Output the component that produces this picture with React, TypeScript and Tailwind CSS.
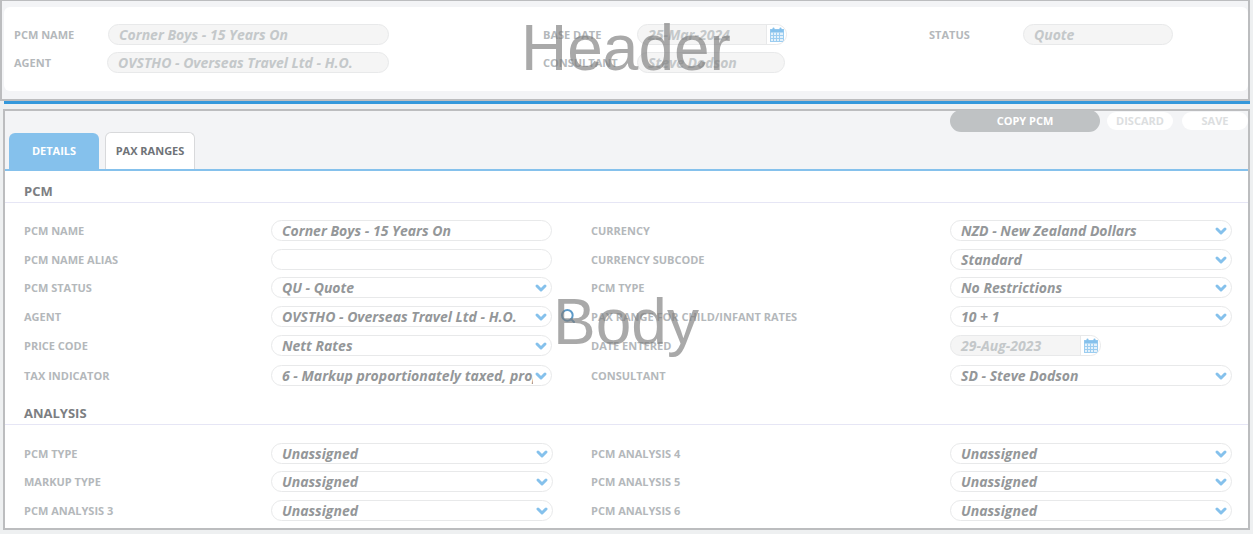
// PCM details form
import { ChevronDown, Search } from 'lucide-react';

function CalendarIcon() {
  return (
    <svg width="14" height="15" viewBox="0 0 14 15" className="shrink-0">
      <rect x="0.5" y="2.5" width="13" height="12" fill="#e3f1fb" stroke="#9ccdf0" />
      <rect x="0.5" y="2.5" width="13" height="3" fill="#85c1ec" />
      <path d="M3.5 5.5v9M6.5 5.5v9M9.5 5.5v9M.5 8.5h13M.5 11.5h13" stroke="#9ccdf0" strokeWidth="1" fill="none" />
      <rect x="2.5" y="0.5" width="2" height="3.5" rx="1" fill="#85c1ec" />
      <rect x="9.5" y="0.5" width="2" height="3.5" rx="1" fill="#85c1ec" />
    </svg>
  );
}

function HeaderField({ label, value, labelW, inputW, date }: { label: string; value: string; labelW: string; inputW: string; date?: boolean }) {
  return (
    <div className="flex items-center h-[21px]">
      <span className={`${labelW} shrink-0 pt-[2px] text-[11px] font-bold text-[#b4b8bb]`}>{label}</span>
      <div className={`${inputW} h-[21px] shrink-0 flex items-center rounded-full border border-[#e8e9ea] bg-[#f5f5f5] overflow-hidden`}>
        <span className="flex-1 pl-[10px] text-[14px] font-bold italic text-[#c4c8ca] whitespace-nowrap">{value}</span>
        {date && (
          <span className="w-[20px] h-full flex items-center justify-center bg-white border-l border-[#e8e9ea]">
            <CalendarIcon />
          </span>
        )}
      </div>
    </div>
  );
}

function Field({ label, value, type, labelW, inputW }: { label: string; value?: string; type: 'text' | 'select' | 'date'; labelW: string; inputW: string }) {
  return (
    <div className="flex items-center h-[21px]">
      <span className={`${labelW} shrink-0 pt-[2px] text-[11px] font-bold text-[#b4b8bb] whitespace-nowrap`}>{label}</span>
      {type === 'date' ? (
        <div className="w-[151px] h-[21px] shrink-0 flex items-center rounded-full border border-[#e8e9ea] bg-[#f5f5f5] overflow-hidden">
          <span className="flex-1 pl-[10px] text-[14px] font-bold italic text-[#c4c8ca]">{value}</span>
          <span className="w-[20px] h-full flex items-center justify-center bg-white border-l border-[#e8e9ea]">
            <CalendarIcon />
          </span>
        </div>
      ) : (
        <div className={`${inputW} h-[21px] shrink-0 flex items-center rounded-full border border-[#e8e9ea] bg-white overflow-hidden`}>
          <span className="flex-1 min-w-0 overflow-hidden whitespace-nowrap pl-[10px] text-[14px] font-bold italic text-[#949799]">{value}</span>
          {type === 'select' && <ChevronDown className="w-[16px] h-[16px] mr-[2px] shrink-0 text-[#85c1ec]" strokeWidth={4.5} />}
        </div>
      )}
    </div>
  );
}

const pcmRows: { left: [string, string, 'text' | 'select']; right: [string, string, 'select' | 'date']; h: string }[] = [
  { left: ['PCM NAME', 'Corner Boys - 15 Years On', 'text'], right: ['CURRENCY', 'NZD - New Zealand Dollars', 'select'], h: 'mb-[8px]' },
  { left: ['PCM NAME ALIAS', '', 'text'], right: ['CURRENCY SUBCODE', 'Standard', 'select'], h: 'mb-[7px]' },
  { left: ['PCM STATUS', 'QU - Quote', 'select'], right: ['PCM TYPE', 'No Restrictions', 'select'], h: 'mb-[8px]' },
  { left: ['AGENT', 'OVSTHO - Overseas Travel Ltd - H.O.', 'select'], right: ['PAX RANGE FOR CHILD/INFANT RATES', '10 + 1', 'select'], h: 'mb-[8px]' },
  { left: ['PRICE CODE', 'Nett Rates', 'select'], right: ['DATE ENTERED', '29-Aug-2023', 'date'], h: 'mb-[9px]' },
  { left: ['TAX INDICATOR', '6 - Markup proportionately taxed, proportionately', 'select'], right: ['CONSULTANT', 'SD - Steve Dodson', 'select'], h: '' },
];

const analysisRows = [
  ['PCM TYPE', 'PCM ANALYSIS 4', 'mb-[7px]'],
  ['MARKUP TYPE', 'PCM ANALYSIS 5', 'mb-[8px]'],
  ['PCM ANALYSIS 3', 'PCM ANALYSIS 6', ''],
];

export default function App() {
  return (
    <div className="relative w-[1253px] h-[534px] overflow-hidden bg-[#eef0f1] font-['Open_Sans',sans-serif]">
      {/* Header */}
      <div className="w-[1250px] h-[101px] border-2 border-t-[1px] border-[#bcbdbf] bg-[#f3f4f6] pl-[2px] pt-[6px]">
        <div className="h-[84px] rounded-[6px] bg-white pl-[10px] pt-[17px] flex">
          <div className="w-[529px] flex flex-col gap-[7px]">
            <HeaderField label="PCM NAME" value="Corner Boys - 15 Years On" labelW="w-[94px]" inputW="w-[281px]" />
            <HeaderField label="AGENT" value="OVSTHO - Overseas Travel Ltd - H.O." labelW="w-[93px]" inputW="w-[282px]" />
          </div>
          <div className="w-[386px] flex flex-col gap-[7px]">
            <HeaderField label="BASE DATE" value="25-Mar-2024" labelW="w-[94px]" inputW="w-[150px]" date />
            <HeaderField label="CONSULTANT" value="Steve Dodson" labelW="w-[94px]" inputW="w-[148px]" />
          </div>
          <div>
            <HeaderField label="STATUS" value="Quote" labelW="w-[94px]" inputW="w-[150px]" />
          </div>
        </div>
      </div>
      <div className="ml-[4px] w-[1246px] h-[3px] bg-[#3498db]" />

      {/* Body */}
      <div className="mt-[5px] ml-[3px] w-[1247px] h-[421px] border-2 border-[#bcbdbf] bg-white">
        <div className="relative h-[60px] bg-[#f3f4f6] border-b-[2px] border-[#85c1ec] flex items-end pl-[4px]">
          <div className="w-[90px] h-[36px] rounded-t-[6px] bg-[#85c1ec] flex items-center justify-center text-[11px] font-bold text-white">DETAILS</div>
          <div className="ml-[6px] w-[90px] h-[37px] rounded-t-[6px] bg-white border border-b-0 border-[#d8d9db] flex items-center justify-center text-[11px] font-bold text-[#6f7378]">PAX RANGES</div>
          <div className="absolute top-[-1px] right-0 flex items-start">
            <div className="w-[150px] h-[22px] rounded-full bg-[#bfc2c4] flex items-center justify-center text-[11px] font-bold text-white">COPY PCM</div>
            <div className="ml-[7px] mt-[2px] w-[66px] h-[18px] rounded-full bg-white flex items-center justify-center text-[11px] font-bold text-[#dcdee0]">DISCARD</div>
            <div className="ml-[9px] mt-[2px] w-[66px] h-[18px] rounded-full bg-white flex items-center justify-center text-[11px] font-bold text-[#dcdee0]">SAVE</div>
          </div>
        </div>

        <div className="h-[32px] border-b border-[#e6e6f5] pl-[19px] pb-[1px] flex items-end text-[13px] font-bold text-[#7c7e82]">PCM</div>

        <div className="relative pt-[17px] pl-[19px]">
          {pcmRows.map((r) => (
            <div key={r.left[0]} className={`flex ${r.h}`}>
              <div className="w-[567px]">
                <Field label={r.left[0]} value={r.left[1]} type={r.left[2]} labelW="w-[247px]" inputW="w-[281px]" />
              </div>
              <Field label={r.right[0]} value={r.right[1]} type={r.right[2]} labelW="w-[359px]" inputW="w-[282px]" />
            </div>
          ))}
          <Search className="absolute left-[555px] top-[105px] w-[16px] h-[16px] text-[#5c9ac9]" strokeWidth={3} />
        </div>

        <div className="mt-[15px] h-[24px] border-b border-[#e6e6f5] pl-[19px] pb-[1px] flex items-end text-[13px] font-bold text-[#7c7e82]">ANALYSIS</div>

        <div className="pt-[18px] pl-[19px]">
          {analysisRows.map((r) => (
            <div key={r[0]} className={`flex ${r[2]}`}>
              <div className="w-[567px]">
                <Field label={r[0]} value="Unassigned" type="select" labelW="w-[247px]" inputW="w-[282px]" />
              </div>
              <Field label={r[1]} value="Unassigned" type="select" labelW="w-[359px]" inputW="w-[282px]" />
            </div>
          ))}
        </div>
      </div>

      {/* Overlay labels */}
      <span className="absolute left-[521px] top-[11px] text-[64px] leading-[74px] font-['Liberation_Sans',sans-serif] text-[#7b7b7b]/65 pointer-events-none">Header</span>
      <span className="absolute left-[553px] top-[285px] text-[64px] leading-[74px] font-['Liberation_Sans',sans-serif] text-[#7b7b7b]/65 pointer-events-none">Body</span>
    </div>
  );
}
